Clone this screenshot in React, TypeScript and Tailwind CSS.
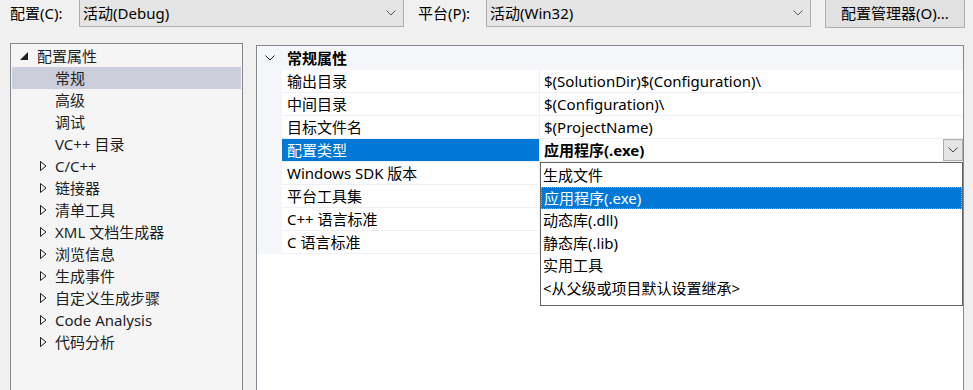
import React from "react";

const FONT = "font-['Noto_Sans','Noto_Sans_CJK_SC',sans-serif]";

const Chevron = ({ className = "" }: { className?: string }) => (
  <svg width="10" height="6" viewBox="0 0 10 6" className={className}>
    <path d="M0.5 0.5 L5 5 L9.5 0.5" fill="none" stroke="currentColor" strokeWidth="1" />
  </svg>
);

const Combo = ({ text, width }: { text: string; width: string }) => (
  <div
    className={`${width} -mt-px flex h-[28px] items-center justify-between border border-[#adadad] bg-[#e5e5e5] pl-[3px] pr-[7px]`}
  >
    <span className="text-[15px] text-black">{text}</span>
    <Chevron className="text-[#555]" />
  </div>
);

const treeChildren = ["常规", "高级", "调试", "VC++ 目录"];
const collapsed = [
  "C/C++",
  "链接器",
  "清单工具",
  "XML 文档生成器",
  "浏览信息",
  "生成事件",
  "自定义生成步骤",
  "Code Analysis",
  "代码分析",
];

const props = [
  { name: "输出目录", value: "$(SolutionDir)$(Configuration)\\" },
  { name: "中间目录", value: "$(Configuration)\\" },
  { name: "目标文件名", value: "$(ProjectName)" },
  { name: "配置类型", value: "应用程序(.exe)", selected: true },
  { name: "Windows SDK 版本", value: "" },
  { name: "平台工具集", value: "" },
  { name: "C++ 语言标准", value: "" },
  { name: "C 语言标准", value: "" },
];

const options = ["生成文件", "应用程序(.exe)", "动态库(.dll)", "静态库(.lib)", "实用工具", "<从父级或项目默认设置继承>"];

const HollowArrow = () => (
  <svg width="7" height="10" viewBox="0 0 7 10" className="shrink-0">
    <path d="M0.5 0.5 L6 5 L0.5 9.5 Z" fill="none" stroke="#1e1e1e" strokeWidth="1" />
  </svg>
);

export default function App() {
  return (
    <div className={`${FONT} h-[390px] w-[973px] overflow-hidden bg-[#f0f0f0] text-[15px] text-[#1e1e1e]`}>
      {/* Top bar */}
      <div className="flex h-[27px] items-start">
        <span className="ml-[10px] mt-[2px] w-[69px] text-black">配置(C):</span>
        <Combo text="活动(Debug)" width="w-[325px]" />
        <span className="ml-[14px] mt-[2px] w-[68px] text-black">平台(P):</span>
        <Combo text="活动(Win32)" width="w-[325px]" />
        <div className="-mt-px ml-[14px] flex h-[29px] w-[140px] items-center justify-center border border-[#adadad] bg-[#e1e1e1] text-black">
          配置管理器(O)...
        </div>
      </div>

      <div className="flex items-start">
        {/* Tree */}
        <div className="ml-[10px] mt-[16px] h-[400px] w-[233px] border border-[#828790] bg-[#f5f5f5] p-px">
          <div className="flex h-[22px] items-center">
            <svg width="8" height="8" viewBox="0 0 8 8" className="ml-[8px]">
              <path d="M8 0 L8 8 L0 8 Z" fill="#1e1e1e" />
            </svg>
            <span className="ml-[9px]">配置属性</span>
          </div>
          {treeChildren.map((t, i) => (
            <div
              key={t}
              className={`flex h-[22px] items-center pl-[43px] ${i === 0 ? "bg-[#cccedb]" : ""}`}
            >
              {t}
            </div>
          ))}
          {collapsed.map((t) => (
            <div key={t} className="flex h-[22px] items-center pl-[28px]">
              <HollowArrow />
              <span className="ml-[8px]">{t}</span>
            </div>
          ))}
        </div>

        {/* Property grid */}
        <div className="relative ml-[13px] mt-[18px] h-[400px] w-[708px] border border-[#828790] bg-white">
          <div className="flex h-[24px] items-center bg-[#f5f6fa]">
            <Chevron className="ml-[8px] text-[#1e1e1e]" />
            <span className="ml-[12px] font-bold text-black">常规属性</span>
          </div>
          <div className="flex">
            <div className="w-[25px] bg-[#f5f6fa]" />
            <div className="flex-1">
              {props.map((p) => (
                <div key={p.name} className="flex h-[23px] border-b border-[#eef0f4]">
                  <div
                    className={`flex w-[258px] items-center border-r border-[#eef0f4] pl-[5px] ${
                      p.selected ? "bg-[#0078d7] text-white" : "text-black"
                    }`}
                  >
                    {p.name}
                  </div>
                  <div className="flex flex-1 items-center justify-between pl-[4px]">
                    <span className={p.selected ? "font-bold text-black" : "text-black"}>{p.value}</span>
                    {p.selected && (
                      <div className="flex h-[22px] w-[20px] items-center justify-center border border-[#acacac] bg-[#e5e5e5]">
                        <Chevron className="text-[#444]" />
                      </div>
                    )}
                  </div>
                </div>
              ))}
            </div>
          </div>

          {/* Dropdown list */}
          <div className="absolute left-[283px] top-[116px] h-[144px] w-[423px] border border-[#646464] bg-white pt-px">
            {options.map((o, i) => (
              <div
                key={o}
                className={`flex h-[22.5px] items-center pl-[2px] ${
                  i === 1
                    ? "border border-dotted border-[#e0a040] bg-[#0078d7] text-white"
                    : "text-black"
                }`}
              >
                {o}
              </div>
            ))}
          </div>
        </div>
      </div>
    </div>
  );
}
